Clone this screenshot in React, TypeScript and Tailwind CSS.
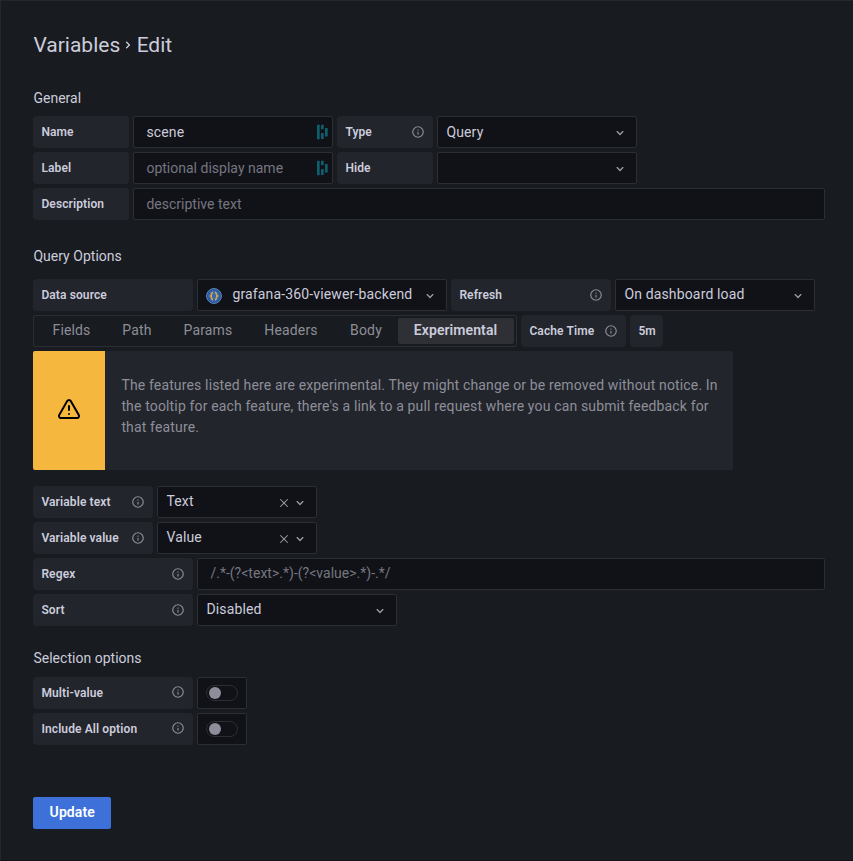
import type { ReactNode } from "react";

function Glyph({ d, size, className = "" }: { d: string; size: number; className?: string }) {
  return (
    <svg width={size} height={size} viewBox="0 0 24 24" fill="currentColor" className={`shrink-0 ${className}`}>
      <path d={d} />
    </svg>
  );
}

const INFO =
  "M12,2A10,10,0,1,0,22,12,10.01114,10.01114,0,0,0,12,2Zm0,18a8,8,0,1,1,8-8A8.00917,8.00917,0,0,1,12,20Zm0-8.5a1,1,0,0,0-1,1v3a1,1,0,0,0,2,0v-3A1,1,0,0,0,12,11.5Zm0-4a1.25,1.25,0,1,0,1.25,1.25A1.25,1.25,0,0,0,12,7.5Z";
const DOWN =
  "M17,9.17a1,1,0,0,0-1.41,0L12,12.71,8.46,9.17a1,1,0,0,0-1.41,0,1,1,0,0,0,0,1.42l4.24,4.24a1,1,0,0,0,1.42,0L17,10.59A1,1,0,0,0,17,9.17Z";
const RIGHT =
  "M14.83,11.29,10.59,7.05a1,1,0,0,0-1.42,0,1,1,0,0,0,0,1.41L12.71,12,9.17,15.54a1,1,0,0,0,0,1.41,1,1,0,0,0,.71.29,1,1,0,0,0,.71-.29l4.24-4.24A1,1,0,0,0,14.83,11.29Z";
const TIMES =
  "M13.41,12l6.3-6.29a1,1,0,1,0-1.42-1.42L12,10.59,5.71,4.29A1,1,0,0,0,4.29,5.71L10.59,12l-6.3,6.29a1,1,0,0,0,0,1.42,1,1,0,0,0,1.42,0L12,13.41l6.29,6.3a1,1,0,0,0,1.42,0,1,1,0,0,0,0-1.42Z";
const WARN =
  "M12,16a1,1,0,1,0,1,1A1,1,0,0,0,12,16Zm10.67,1.47-8.05-14a3,3,0,0,0-5.24,0l-8,14A3,3,0,0,0,3.94,22H20.06a3,3,0,0,0,2.61-4.53Zm-1.73,2a1,1,0,0,1-.88.51H3.94a1,1,0,0,1-.88-.51,1,1,0,0,1,0-1l8-14a1,1,0,0,1,1.78,0l8.05,14A1,1,0,0,1,20.94,19.49ZM12,8a1,1,0,0,0-1,1v4a1,1,0,0,0,2,0V9A1,1,0,0,0,12,8Z";

function Label({ children, width, info, infoClass = "" }: { children: ReactNode; width: string; info?: boolean; infoClass?: string }) {
  return (
    <div className={`flex h-8 shrink-0 items-center justify-between rounded-sm bg-[#22252b] px-2 text-xs font-semibold tracking-[0.11px] ${width}`}>
      <span className="whitespace-nowrap">{children}</span>
      {info && <Glyph d={INFO} size={14} className={`text-[#8e8e9a] ${infoClass}`} />}
    </div>
  );
}

const BOX = "flex h-8 shrink-0 items-center rounded-xs border border-[#2d2e34] bg-[#111217]";

function Managed() {
  return (
    <svg width="12" height="16" viewBox="0 0 12 16" fill="#0e5f6e" className="shrink-0">
      <rect x="0" y="0.7" width="2.7" height="14.6" rx="0.5" />
      <rect x="4" y="0.7" width="2.7" height="4.5" rx="0.5" />
      <rect x="4" y="9" width="2.7" height="6" rx="0.5" />
      <rect x="8" y="4" width="2.7" height="8.5" rx="0.5" />
    </svg>
  );
}

function Input({ value, placeholder, width, managed, textClass = "" }: { value?: string; placeholder?: string; width: string; managed?: boolean; textClass?: string }) {
  return (
    <div className={`${BOX} justify-between pl-3 pr-[3px] ${width}`}>
      <span className={`${value ? "" : "tracking-[0.01px] text-[#757681]"} ${textClass}`}>{value ?? placeholder}</span>
      {managed && <Managed />}
    </div>
  );
}

function Select({ children, width, clearable, textClass = "pb-0.5", chevron = "mr-2" }: { children?: ReactNode; width: string; clearable?: boolean; textClass?: string; chevron?: string }) {
  return (
    <div className={`${BOX} pl-2 ${width}`}>
      <div className={`flex grow items-center ${textClass}`}>{children}</div>
      <div className={`flex items-center gap-0.5 pt-0.5 text-[#9c9ca9] ${chevron}`}>
        {clearable && <Glyph d={TIMES} size={12} />}
        <Glyph d={DOWN} size={16} />
      </div>
    </div>
  );
}

function Toggle() {
  return (
    <div className={`${BOX} w-[50px] justify-center`}>
      <div className="flex h-4 w-8 items-center rounded-full border border-[#2d2e34] pl-0.5">
        <div className="size-3 rounded-full bg-[#8e8e9a]" />
      </div>
    </div>
  );
}

function Row({ children }: { children: ReactNode }) {
  return <div className="flex gap-1">{children}</div>;
}

export default function App() {
  return (
    <main className="flex h-[861px] w-[853px] flex-col border-b border-[#111217] bg-[#181b1f] indent-[0.4px] font-[Roboto,sans-serif] text-sm tracking-[0.15px] text-[#ccccdc]">
      <div className="flex grow flex-col border-l border-t border-[#25272c] px-8">
        <h3 className="mt-8 flex h-6 items-center text-[21px] leading-6 tracking-normal">
          Variables
          <Glyph d={RIGHT} size={16} />
          Edit
        </h3>

        <h5 className="mt-[31px] h-5 leading-5 tracking-[0.02px]">General</h5>
        <section className="mt-2 flex flex-col gap-1">
          <Row>
            <Label width="w-24">Name</Label>
            <Input width="w-[200px]" value="scene" managed />
            <Label width="w-24" info>Type</Label>
            <Select width="w-[200px]" textClass="">Query</Select>
          </Row>
          <Row>
            <Label width="w-24">Label</Label>
            <Input width="w-[200px]" placeholder="optional display name" managed />
            <Label width="w-24">Hide</Label>
            <Select width="w-[200px]" />
          </Row>
          <Row>
            <Label width="w-24">Description</Label>
            <Input width="w-[692px]" placeholder="descriptive text" />
          </Row>
        </section>

        <h5 className="mt-[26px] h-5 leading-5 tracking-[0.02px]">Query Options</h5>
        <section className="mt-[13px] flex flex-col gap-1">
          <Row>
            <Label width="w-40">Data source</Label>
            <Select width="w-[250px]" textClass="">
              <svg width="16" height="16" viewBox="0 0 16 16" className="mt-0.5 shrink-0">
                <circle cx="8" cy="8" r="7.4" fill="#234a87" stroke="#6390cf" strokeWidth="1" />
                <circle cx="8" cy="8" r="6" fill="#3268b8" />
                <path d="M7 4.2C5.1 4.3 6.3 7 4.7 8c1.6 1 .4 3.7 2.3 3.8M9 4.2c1.9.1.7 2.8 2.3 3.8-1.6 1-.4 3.7-2.3 3.8" fill="none" stroke="#eba82f" strokeWidth="1.5" />
              </svg>
              <span className="ml-[10px] pb-0.5">grafana-360-viewer-backend</span>
            </Select>
            <Label width="w-40" info>Refresh</Label>
            <Select width="w-[200px]">On dashboard load</Select>
          </Row>
          <Row>
            <div className="flex h-8 w-[484px] shrink-0 rounded-xs border border-[#2d2e34] p-0.5 indent-px leading-6 text-[#8e8e9a]">
              <span className="w-[70px] text-center">Fields</span>
              <span className="w-[61px] text-center">Path</span>
              <span className="w-[81px] text-center">Params</span>
              <span className="w-[85px] text-center">Headers</span>
              <span className="w-[65px] text-center">Body</span>
              <span className="w-[116px] rounded-xs bg-[#2e3036] pr-px text-center indent-0 font-semibold tracking-[0.08px] text-[#ccccdc]">Experimental</span>
            </div>
            <Label width="w-[105px]" info>Cache Time</Label>
            <Label width="w-[33px]">5m</Label>
          </Row>
          <div className="flex h-[119px] w-[700px] overflow-hidden rounded-xs bg-[#22252b]">
            <div className="flex w-[72px] shrink-0 items-center justify-center bg-[#f5b73d] text-black">
              <Glyph d={WARN} size={24} className="mb-1" />
            </div>
            <p className="whitespace-nowrap pl-[16.4px] pt-6 indent-0 leading-[21px] text-[#8e8e9a]">
              The features listed here are experimental. They might change or be removed without notice. In
              <br />
              the tooltip for each feature, there's a link to a pull request where you can submit feedback for
              <br />
              that feature.
            </p>
          </div>
        </section>

        <section className="mt-4 flex flex-col gap-1">
          <Row>
            <Label width="w-[120px]" info>Variable text</Label>
            <Select width="w-40" clearable>Text</Select>
          </Row>
          <Row>
            <Label width="w-[120px]" info>Variable value</Label>
            <Select width="w-40" clearable>Value</Select>
          </Row>
          <Row>
            <Label width="w-40" info>Regex</Label>
            <Input width="w-[628px]" placeholder="/.*-(?<text>.*)-(?<value>.*)-.*/" textClass="pb-0.5" />
          </Row>
          <Row>
            <Label width="w-40" info>Sort</Label>
            <Select width="w-[200px]">Disabled</Select>
          </Row>
        </section>

        <h5 className="mt-[22px] h-5 leading-5 tracking-[0.02px]">Selection options</h5>
        <section className="mt-[9px] flex flex-col gap-1">
          <Row>
            <Label width="w-40" info infoClass="mb-0.5">Multi-value</Label>
            <Toggle />
          </Row>
          <Row>
            <Label width="w-40" info infoClass="mb-0.5">Include All option</Label>
            <Toggle />
          </Row>
        </section>

        <button className="mt-[52px] h-8 w-[78px] shrink-0 rounded-xs bg-[#3d71d9] pb-0.5 indent-[0.5px] font-semibold tracking-[0.1px] text-white">Update</button>
      </div>
    </main>
  );
}
